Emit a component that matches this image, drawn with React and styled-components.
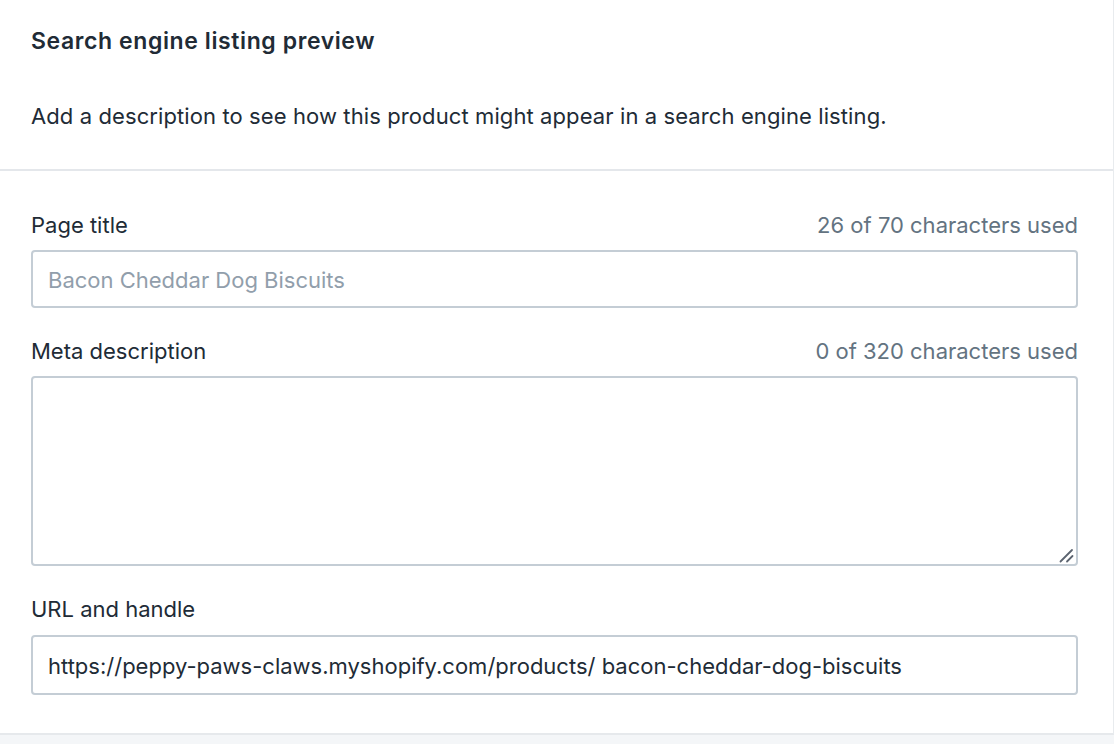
import React from "react";
import styled, { createGlobalStyle } from "styled-components";

const Global = createGlobalStyle`
  html, body { margin: 0; padding: 0; background: #f4f6f8; }
  body { font-family: Inter, "Noto Sans", "Liberation Sans", sans-serif; color: #212b36; }
  #root { min-height: 744px; display: flex; flex-direction: column; }
`;

const Card = styled.section`
  background: #ffffff;
  border-right: 1px solid #e8ebee;
  border-bottom: 2px solid #e6e9ec;
`;

const Header = styled.div`
  padding: 27px 35px 39px 31px;
  border-bottom: 2px solid #e4e7eb;
  display: flex;
  flex-direction: column;
  gap: 47px;
`;

const Title = styled.h2`
  margin: 0;
  font-size: 23px;
  line-height: 28px;
  font-weight: 600;
  letter-spacing: 0.6px;
  color: #212b36;
`;

const Description = styled.p`
  margin: 0;
  font-size: 22px;
  line-height: 28px;
  letter-spacing: 0.1px;
  color: #212b36;
`;

const Fields = styled.div`
  padding: 40px 35px 38px 31px;
  display: flex;
  flex-direction: column;
  gap: 29px;
`;

const Field = styled.div`
  display: flex;
  flex-direction: column;
  gap: ${(p) => p.$gap || 11}px;
`;

const LabelRow = styled.div`
  display: flex;
  justify-content: space-between;
  align-items: center;
  font-size: 22px;
  line-height: 28px;
`;

const Label = styled.label`
  color: #212b36;
`;

const Counter = styled.span`
  color: #637381;
`;

const Input = styled.input`
  box-sizing: border-box;
  width: 100%;
  height: ${(p) => p.$h || 58}px;
  border: 2px solid #c4cdd5;
  border-radius: 4px;
  padding: 2px 15px 0;
  font-family: inherit;
  font-size: 22px;
  color: #212b36;
  background: #fff;
  outline: none;
  &::placeholder { color: #919eab; }
`;

const AreaWrap = styled.div`
  position: relative;
`;

const TextArea = styled.textarea`
  box-sizing: border-box;
  width: 100%;
  height: 190px;
  border: 2px solid #c4cdd5;
  border-radius: 4px;
  padding: 14px 15px;
  font-family: inherit;
  font-size: 22px;
  color: #212b36;
  resize: none;
  outline: none;
  display: block;
`;

const Grip = styled.svg`
  position: absolute;
  right: 4px;
  bottom: 3px;
  pointer-events: none;
`;

const Footer = styled.div`
  flex: 1;
  background: #f4f6f8;
`;

export default function App() {
  return (
    <>
      <Global />
      <Card>
        <Header>
          <Title>Search engine listing preview</Title>
          <Description>
            Add a description to see how this product might appear in a search engine listing.
          </Description>
        </Header>
        <Fields>
          <Field>
            <LabelRow>
              <Label>Page title</Label>
              <Counter>26 of 70 characters used</Counter>
            </LabelRow>
            <Input placeholder="Bacon Cheddar Dog Biscuits" />
          </Field>
          <Field>
            <LabelRow>
              <Label>Meta description</Label>
              <Counter>0 of 320 characters used</Counter>
            </LabelRow>
            <AreaWrap>
              <TextArea />
              <Grip width="15" height="15" viewBox="0 0 15 15">
                <path d="M1.5 13.5 L13 2 M8 13.5 L13.5 8" stroke="#5c6470" strokeWidth="1.8" strokeLinecap="round" />
              </Grip>
            </AreaWrap>
          </Field>
          <Field $gap={12}>
            <LabelRow>
              <Label>URL and handle</Label>
            </LabelRow>
            <Input
              $h={60}
              defaultValue="https://peppy-paws-claws.myshopify.com/products/ bacon-cheddar-dog-biscuits"
            />
          </Field>
        </Fields>
      </Card>
      <Footer />
    </>
  );
}
